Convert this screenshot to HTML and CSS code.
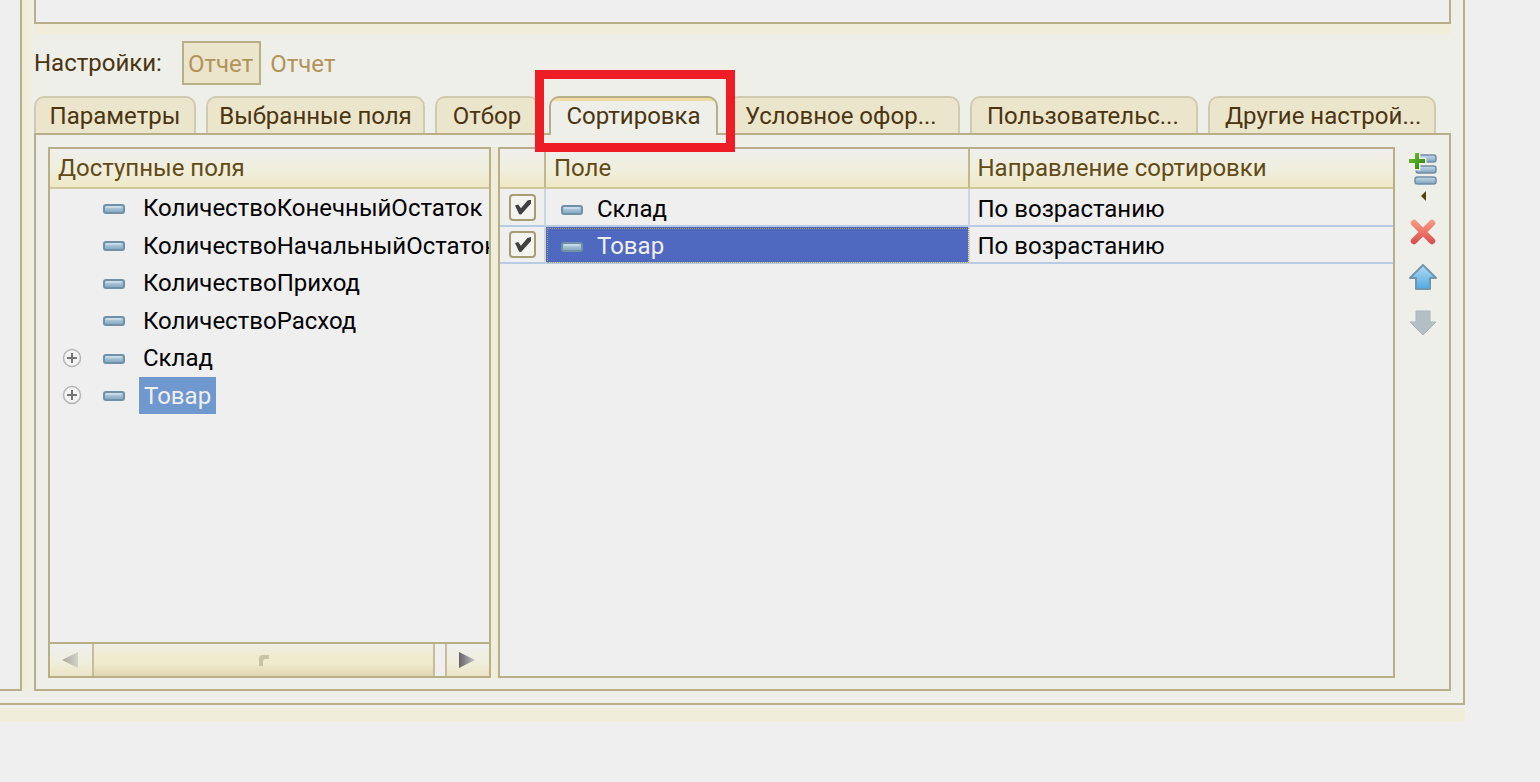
FILE: index.html
```html
<!DOCTYPE html>
<html lang="ru">
<head>
  <meta charset="UTF-8" />
  <meta name="viewport" content="width=device-width, initial-scale=1.0"/>
  <title>Настройки отчета</title>
  <link rel="stylesheet" href="styles.css">
</head>
<body>
  <!-- shared icons -->
  <svg class="defs" width="0" height="0">
    <defs>
      <linearGradient id="bar" x1="0" y1="0" x2="0" y2="1">
        <stop offset="0" stop-color="#c5dbe9"/>
        <stop offset="1" stop-color="#7fa3bd"/>
      </linearGradient>
      <linearGradient id="red" gradientUnits="userSpaceOnUse" x1="0" y1="0" x2="0" y2="26">
        <stop offset="0" stop-color="#f5a08a"/>
        <stop offset="0.5" stop-color="#ee7468"/>
        <stop offset="1" stop-color="#cf4a50"/>
      </linearGradient>
      <linearGradient id="blue" x1="0" y1="0" x2="0" y2="1">
        <stop offset="0" stop-color="#b4dcf2"/>
        <stop offset="1" stop-color="#4fa9e2"/>
      </linearGradient>
      <linearGradient id="green" x1="0" y1="0" x2="1" y2="1">
        <stop offset="0" stop-color="#6ccb2c"/>
        <stop offset="1" stop-color="#2a7d10"/>
      </linearGradient>
      <linearGradient id="grayLeft" x1="0" y1="0" x2="1" y2="0">
        <stop offset="0" stop-color="#aaa899"/>
        <stop offset="1" stop-color="#d3d2c8"/>
      </linearGradient>
      <linearGradient id="grayRight" x1="0" y1="0" x2="1" y2="0">
        <stop offset="0" stop-color="#666266"/>
        <stop offset="1" stop-color="#c4c2c8"/>
      </linearGradient>
      <symbol id="field" viewBox="0 0 22 10">
        <rect x="1" y="1" width="20" height="8" rx="2" fill="url(#bar)" stroke="#7090a7" stroke-width="2"/>
        <path d="M3 3h15" stroke="#d9e8f1" stroke-width="1"/>
      </symbol>
      <symbol id="plus" viewBox="0 0 20 20">
        <circle cx="10" cy="10" r="8.5" fill="#f3f3f3" stroke="#b5b5b5" stroke-width="1.5"/>
        <path d="M10 5v10M5 10h10" stroke="#757575" stroke-width="2"/>
      </symbol>
    </defs>
  </svg>

  <div class="window">
    <div class="side"></div>
    <div class="splitter"></div>

    <main class="content">
      <div class="preview"></div>
      <div class="splitter-h"></div>

      <div class="settings">
        <span class="label">Настройки:</span>
        <button class="current">Отчет</button>
        <a href="#" class="crumb">Отчет</a>
      </div>

      <div class="tabs">
        <button class="tab">Параметры</button>
        <button class="tab">Выбранные поля</button>
        <button class="tab">Отбор</button>
        <button class="tab active">Сортировка<span class="marker"></span></button>
        <button class="tab wide">Условное офор...</button>
        <button class="tab wide">Пользовательс...</button>
        <button class="tab wide">Другие настрой...</button>
      </div>

      <div class="page">
        <section class="fields">
          <h2 class="head">Доступные поля</h2>
          <ul class="tree">
            <li><svg class="icon"><use href="#field"/></svg><span class="name">КоличествоКонечныйОстаток</span></li>
            <li><svg class="icon"><use href="#field"/></svg><span class="name">КоличествоНачальныйОстаток</span></li>
            <li><svg class="icon"><use href="#field"/></svg><span class="name">КоличествоПриход</span></li>
            <li><svg class="icon"><use href="#field"/></svg><span class="name">КоличествоРасход</span></li>
            <li><button class="expand" aria-label="Развернуть"><svg><use href="#plus"/></svg></button><svg class="icon"><use href="#field"/></svg><span class="name">Склад</span></li>
            <li><button class="expand" aria-label="Развернуть"><svg><use href="#plus"/></svg></button><svg class="icon"><use href="#field"/></svg><span class="name selected">Товар</span></li>
          </ul>
          <div class="scrollbar">
            <button class="arrow" aria-label="Влево"><svg width="16" height="16"><path d="M0 8L16 0v16z" fill="url(#grayLeft)"/></svg></button>
            <div class="thumb"><svg width="12" height="12"><path d="M1 12V5q0-4 4-4h6v4H7q-2 0-2 3v4z" fill="#c8c2a6"/></svg></div>
            <button class="arrow right" aria-label="Вправо"><svg width="16" height="16"><path d="M16 8L0 0v16z" fill="url(#grayRight)"/></svg></button>
          </div>
        </section>

        <div class="splitter-v"></div>

        <section class="sorting">
          <table>
            <thead>
              <tr><th class="check"></th><th>Поле</th><th>Направление сортировки</th></tr>
            </thead>
            <tbody>
              <tr>
                <td class="check"><input type="checkbox" aria-label="Склад" checked></td>
                <td><div class="cell"><svg class="icon"><use href="#field"/></svg>Склад</div></td>
                <td>По возрастанию</td>
              </tr>
              <tr>
                <td class="check"><input type="checkbox" aria-label="Товар" checked></td>
                <td class="current-cell"><div class="cell"><svg class="icon"><use href="#field"/></svg>Товар</div></td>
                <td>По возрастанию</td>
              </tr>
            </tbody>
          </table>
        </section>

        <div class="toolbar">
          <button aria-label="Добавить">
            <svg width="30" height="34" viewBox="0 0 30 34">
              <g fill="url(#bar)" stroke="#6f8fa8" stroke-width="1.5">
                <rect x="8" y="3" width="20" height="7" rx="2.5"/>
                <rect x="8" y="14" width="20" height="7" rx="2.5"/>
                <rect x="7" y="25" width="21" height="7" rx="2.5"/>
              </g>
              <path d="M7 1h4v6h6v4h-6v6H7v-6H1V7h6z" fill="url(#green)" stroke="#eef0e8" stroke-width="3" paint-order="stroke"/>
            </svg>
          </button>
          <button class="more" aria-label="Еще"><svg width="5" height="10"><path d="M5 0v10L0 5z" fill="#57420c"/></svg></button>
          <button aria-label="Удалить">
            <svg width="30" height="26" viewBox="0 0 30 26"><path d="M6 4L24 22M24 4L6 22" stroke="url(#red)" stroke-width="6.5" stroke-linecap="round"/></svg>
          </button>
          <button aria-label="Вверх">
            <svg width="30" height="28" viewBox="0 0 30 28"><path d="M15 2L28 15h-6v11H8V15H2z" fill="url(#blue)" stroke="#6f97b0" stroke-width="2" stroke-linejoin="round"/></svg>
          </button>
          <button aria-label="Вниз" disabled>
            <svg width="30" height="28" viewBox="0 0 30 28"><path d="M8 2h14v11h6L15 26 2 13h6z" fill="#b4bec5" stroke="#a9b5bd" stroke-width="1" stroke-linejoin="round"/></svg>
          </button>
        </div>
      </div>
    </main>
  </div>
  <div class="footer-strip"></div>
</body>
</html>
```
FILE: styles.css
```css
* {
  box-sizing: border-box;
}
body {
  margin: 0;
  height: 100vh;
  padding: 0 75px 60px 0;
  display: flex;
  flex-direction: column;
  background: #efefef;
  color: #000;
  font-family: Roboto, Arial, sans-serif;
  font-size: 24px;
  line-height: 28px;
}
button {
  margin: 0;
  padding: 0;
  border: none;
  background: none;
  font: inherit;
  color: inherit;
  cursor: pointer;
}
svg {
  display: block;
  flex: none;
}
.defs {
  position: absolute;
}

.window {
  flex: 1;
  min-height: 0;
  display: flex;
  padding: 0 12px 12px 0;
  background: #efefe9;
  border: solid #b8ae88;
  border-width: 0 2px 2px 0;
}
.side {
  width: 22px;
  background: #efefef;
  border: solid #b8ae88;
  border-width: 0 2px 2px 0;
}
.splitter {
  width: 9px;
  margin-right: 3px;
  background: #f0eedb;
}
.footer-strip {
  height: 14px;
  margin-top: 3px;
  background: #f0eedb;
}
.content {
  flex: 1;
  min-width: 0;
  display: flex;
  flex-direction: column;
}
.preview {
  height: 24px;
  background: #efefef;
  border: 2px solid #b8ae88;
  border-top: none;
}
.splitter-h {
  height: 10px;
  background: #f0eedb;
}

.settings {
  display: flex;
  align-items: center;
  margin-top: 7px;
  color: #4b3410;
}
.label {
  width: 148px;
}
.current {
  height: 44px;
  padding: 2px 6px 0 4px;
  border: 2px solid #b8ae88;
  background: #ebe5cc;
  color: #b2935a;
}
.crumb {
  padding-top: 2px;
  margin-left: 9px;
  color: #b2935a;
  text-decoration: none;
}

.tabs {
  display: grid;
  grid-template-columns: 162fr 219fr 104fr 169fr 232fr 228fr 228fr;
  gap: 10px;
  height: 39px;
  margin-top: 11px;
  padding-right: 15px;
}
.tab {
  position: relative;
  height: 37px;
  border: 2px solid #d2cab0;
  border-bottom: none;
  border-radius: 10px 10px 0 0;
  background: #ebe5cc;
  color: #4b3410;
  white-space: nowrap;
}
.tab.wide {
  padding-left: 15px;
  text-align: left;
}
.tab.active {
  z-index: 1;
  height: 39px;
  padding-bottom: 2px;
  border-color: #b8ae88;
  background: linear-gradient(#f0dca0 3px, #efefe9 3px);
}
.marker {
  position: absolute;
  top: -28px;
  right: -19px;
  bottom: -17px;
  left: -16px;
  border: 9px solid #ee1c25;
}

.page {
  flex: 1;
  min-height: 0;
  display: flex;
  margin-top: -2px;
  padding: 12px 0 11px 12px;
  border: 2px solid #b8ae88;
}
.fields {
  width: 443px;
  display: flex;
  flex-direction: column;
  overflow: hidden;
  background: #efefef;
  border: 2px solid #b8ae88;
}
.head,
th {
  height: 40px;
  margin: 0;
  padding: 0 8px;
  border-bottom: 2px solid #cfc6a2;
  background: linear-gradient(#efefed, #f0eedb 60%, #efe8c6);
  color: #634a14;
  font-size: 24px;
  font-weight: normal;
  line-height: 38px;
  text-align: left;
}
.tree {
  height: 225px;
  margin: 0 0 auto;
  padding: 0;
  display: grid;
  grid-template-rows: repeat(6, 1fr);
  list-style: none;
}
.tree li {
  display: grid;
  grid-template-columns: 41px 36px auto;
  align-items: center;
  padding-left: 12px;
  white-space: nowrap;
}
.expand,
.expand svg {
  width: 20px;
  height: 20px;
}
.icon {
  grid-column: 2;
  width: 22px;
  height: 10px;
  margin-top: 2px;
}
.name {
  grid-column: 3;
  justify-self: start;
  padding: 2px 4px 0;
  line-height: 35px;
}
.name.selected {
  padding: 2px 5px 0;
  background: #6f98cf;
  color: #efefef;
}

.scrollbar {
  display: flex;
  height: 34px;
  border-top: 2px solid #b8ae88;
}
.arrow {
  width: 44px;
  padding-right: 2px;
  display: flex;
  align-items: center;
  justify-content: center;
  background: linear-gradient(#efefef, #f0eedb 60%, #ebe3c6);
  border-right: 2px solid #c6bd9a;
}
.arrow.right {
  margin-left: 10px;
  border-right: none;
  border-left: 2px solid #c6bd9a;
}
.thumb {
  flex: 1;
  display: flex;
  align-items: center;
  justify-content: center;
  background: linear-gradient(#efeee6, #f0ebcd 40%, #f0ebcd 60%, #dfd6b4);
  border-right: 2px solid #c6bd9a;
}
.splitter-v {
  width: 7px;
  background: #f0eedb;
}

.sorting {
  flex: 1;
  min-width: 0;
  background: #efefef;
  border: 2px solid #b8ae88;
}
table {
  width: 100%;
  table-layout: fixed;
  border-collapse: separate;
  border-spacing: 0;
}
th:not(:last-child) {
  border-right: 2px solid #c0b78f;
}
td {
  height: 38px;
  padding: 3px 8px 0;
  border-bottom: 2px solid #b7cce4;
}
tr:last-child td {
  height: 37px;
}
td:not(:last-child) {
  border-right: 2px solid #ccd6e2;
}
th.check,
td.check {
  width: 46px;
  padding: 0 0 0 9px;
}
.cell {
  display: flex;
  align-items: center;
  gap: 14px;
  padding-left: 7px;
}
td.current-cell {
  background: #5069c0;
  color: #efefef;
  outline: 1px dotted #b7a04c;
  outline-offset: -2px;
}
input[type="checkbox"] {
  appearance: none;
  display: block;
  width: 27px;
  height: 27px;
  margin: 0;
  border: 2px solid #a79c74;
  border-radius: 4px;
  background: #f3f3f0;
}
input[type="checkbox"]:checked::before {
  content: "";
  display: block;
  width: 16px;
  height: 15px;
  margin: 4px;
  background: #404040;
  clip-path: polygon(0 40%, 20% 34%, 37% 58%, 78% 6%, 100% 0, 100% 26%, 38% 100%, 26% 98%);
}

.toolbar {
  width: 56px;
  display: flex;
  flex-direction: column;
  align-items: center;
  flex: none;
  margin-right: -2px;
  padding-top: 5px;
}
.toolbar button {
  margin-bottom: 18px;
}
.toolbar button:first-child {
  margin-bottom: 5px;
}
```
